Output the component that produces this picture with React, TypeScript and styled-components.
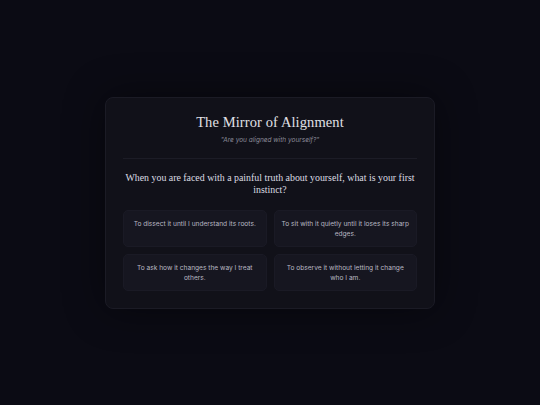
import React from "react";
import styled, { createGlobalStyle } from "styled-components";

const Global = createGlobalStyle`
  html, body { margin: 0; padding: 0; background: #0b0b14; }
  body { font-family: Inter, "Noto Sans", sans-serif; }
  * { box-sizing: border-box; }
`;

const Page = styled.div`
  width: 540px;
  height: 405px;
  display: flex;
  align-items: center;
  justify-content: center;
  background: #0b0b14;
`;

const Card = styled.div`
  width: 330px;
  padding: 14px 17px 17px;
  background: #111119;
  border: 1px solid #1b1b25;
  border-radius: 8px;
  box-shadow: 0 0 40px rgba(0, 0, 0, 0.45);
  display: flex;
  flex-direction: column;
`;

const Header = styled.div`
  display: flex;
  flex-direction: column;
  align-items: center;
  padding-bottom: 13px;
  border-bottom: 1px solid #1c1c26;
`;

const Title = styled.h1`
  margin: 0;
  font-family: "Liberation Serif", "DejaVu Serif", serif;
  font-weight: 400;
  font-size: 14.5px;
  line-height: 20px;
  letter-spacing: 0.1px;
  color: #e0e0e6;
`;

const Subtitle = styled.p`
  margin: 4px 0 0;
  font-size: 6.5px;
  font-style: italic;
  line-height: 9px;
  color: #8a8a98;
`;

const Question = styled.h2`
  margin: 13px -2px 0;
  font-family: "Liberation Serif", "DejaVu Serif", serif;
  font-weight: 400;
  font-size: 9.9px;
  line-height: 12px;
  text-align: center;
  color: #dcdce2;
`;

const Options = styled.div`
  margin-top: 14px;
  display: grid;
  grid-template-columns: 1fr 1fr;
  gap: 7px;
`;

const Option = styled.button`
  height: 37px;
  display: flex;
  align-items: flex-start;
  justify-content: center;
  padding: 8px 7px 0;
  background: #161620;
  border: 1px solid #1a1a25;
  border-radius: 5px;
  font-family: Inter, "Noto Sans", sans-serif;
  font-size: 6.6px;
  line-height: 10px;
  color: #b8b8c3;
  text-align: center;
  cursor: pointer;
`;

const options = [
  "To dissect it until I understand its roots.",
  "To sit with it quietly until it loses its sharp edges.",
  "To ask how it changes the way I treat others.",
  "To observe it without letting it change who I am.",
];

export default function App() {
  return (
    <>
      <Global />
      <Page>
        <Card>
          <Header>
            <Title>The Mirror of Alignment</Title>
            <Subtitle>"Are you aligned with yourself?"</Subtitle>
          </Header>
          <Question>
            When you are faced with a painful truth about yourself, what is your first instinct?
          </Question>
          <Options>
            {options.map((o) => (
              <Option key={o}>{o}</Option>
            ))}
          </Options>
        </Card>
      </Page>
    </>
  );
}
